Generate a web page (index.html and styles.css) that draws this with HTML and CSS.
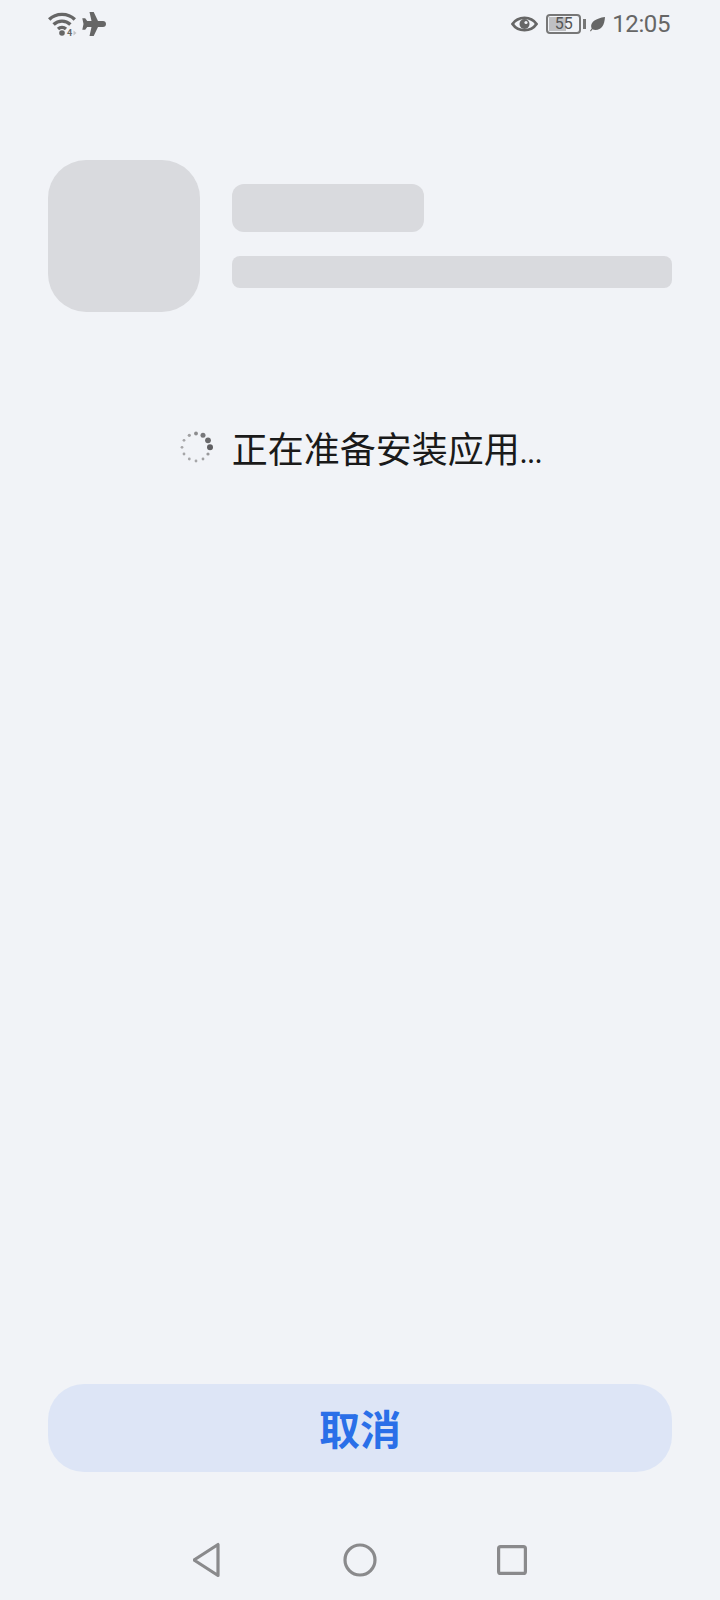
FILE: index.html
```html
<!DOCTYPE html>
<html lang="zh-CN">
<head>
    <meta charset="UTF-8">
    <meta name="viewport" content="width=device-width, initial-scale=1.0">
    <title>正在准备安装应用</title>
    <link rel="stylesheet" href="styles.css">
</head>
<body>
    <div class="screen">
        <div class="status-bar">
            <div class="status-left">
                <svg class="icon-wifi" width="30" height="24" viewBox="0 0 30 24">
                    <path d="M1.200 7.500C8 0.700 20 0.700 26.800 7.500" fill="none" stroke="#666" stroke-width="3.400"/>
                    <path d="M5.600 12.500C10.300 8 17.700 8 22.400 12.500" fill="none" stroke="#666" stroke-width="3.400"/>
                    <path d="M10 17C12.300 15 15.700 15 18 17" fill="none" stroke="#666" stroke-width="3.400"/>
                    <circle cx="14" cy="21" r="2.800" fill="#666"/>
                    <text x="19" y="23.500" class="wifi-num">4</text>
                    <path d="M25.500 18.500l3 2.500-3 2.500z" fill="#c4c4c6"/>
                </svg>
                <svg class="icon-plane" width="24" height="24" viewBox="0 0 24 24">
                    <path d="M7.500 0h4.200L16 9h5c1.800 0 3 1.300 3 3s-1.200 3-3 3h-5l-4.300 9H7.500l2-9H5.200l-2 2.800H0.300L1.500 12 0.300 6.200h2.900l2 2.800h4.300z" fill="#666"/>
                </svg>
            </div>
            <div class="status-right">
                <svg class="icon-eye" width="27" height="18" viewBox="0 0 27 18">
                    <path d="M1.500 9C7 0.800 20 0.800 25.500 9C20 17.200 7 17.200 1.500 9z" fill="none" stroke="#666" stroke-width="2.800"/>
                    <circle cx="13.500" cy="9" r="5" fill="#666"/>
                    <circle cx="15" cy="7.500" r="1.600" fill="#f1f3f7"/>
                </svg>
                <div class="battery">
                    <div class="battery-body">
                        <span class="battery-fill"></span>
                        <span class="battery-num">55</span>
                    </div>
                    <span class="battery-nub"></span>
                </div>
                <svg class="icon-leaf" width="15" height="15" viewBox="0 0 15 15">
                    <path d="M15 0C14.500 8 11.500 13 5.500 13C4.300 13 3.300 12.700 2.500 12.200L0.800 14.500L0 13.800L1.700 11.500C-0.500 7 3.500 1.500 15 0z" fill="#666"/>
                </svg>
                <span class="clock">12:05</span>
            </div>
        </div>

        <div class="app-info">
            <div class="app-icon"></div>
            <div class="app-text">
                <div class="app-name"></div>
                <div class="app-desc"></div>
            </div>
        </div>

        <div class="progress">
            <svg class="spinner" width="36" height="36" viewBox="0 0 36 36">
                <circle cx="18" cy="4.500" r="1.900" fill="#8c8c8e"/>
                <circle cx="25" cy="6.300" r="2.500" fill="#77777a"/>
                <circle cx="30" cy="11.300" r="2.900" fill="#6a6a6c"/>
                <circle cx="32" cy="18.300" r="3" fill="#5f5f62"/>
                <circle cx="30" cy="25" r="1.600" fill="#98989a"/>
                <circle cx="25" cy="30" r="1.400" fill="#a0a0a2"/>
                <circle cx="18" cy="32" r="1.400" fill="#a6a6a8"/>
                <circle cx="11.300" cy="30" r="1.400" fill="#a6a6a8"/>
                <circle cx="6" cy="25" r="1.400" fill="#a6a6a8"/>
                <circle cx="4" cy="18.300" r="1.400" fill="#a6a6a8"/>
                <circle cx="6" cy="11.300" r="1.400" fill="#a6a6a8"/>
                <circle cx="11.300" cy="6.300" r="1.600" fill="#a0a0a2"/>
            </svg>
            <span class="progress-text">正在准备安装应用<span class="dots">...</span></span>
        </div>

        <div class="spacer"></div>

        <button class="btn-cancel" type="button">取消</button>

        <div class="nav-bar">
            <svg width="30" height="36" viewBox="0 0 30 36">
                <path d="M1 18L25 2.500V33.500z" fill="none" stroke="#8a8a8c" stroke-width="3.200" stroke-linejoin="round"/>
            </svg>
            <svg width="34" height="34" viewBox="0 0 34 34">
                <circle cx="17" cy="17" r="15" fill="none" stroke="#8a8a8c" stroke-width="3.200"/>
            </svg>
            <svg width="30" height="30" viewBox="0 0 30 30">
                <rect x="1.600" y="1.600" width="26.800" height="26.800" rx="2" fill="none" stroke="#8a8a8c" stroke-width="3.200"/>
            </svg>
        </div>
    </div>
</body>
</html>
```

FILE: styles.css
```css
* {
    margin: 0;
    padding: 0;
    box-sizing: border-box;
}

body {
    background: #f1f3f7;
    font-family: "Noto Sans CJK SC", Roboto, sans-serif;
}

.screen {
    width: 720px;
    height: 1600px;
    display: flex;
    flex-direction: column;
    padding: 0 48px;
}

.status-bar {
    height: 48px;
    display: flex;
    justify-content: space-between;
    align-items: center;
}

.status-left {
    display: flex;
    align-items: center;
    gap: 4px;
}

.wifi-num {
    font-family: Roboto, sans-serif;
    font-size: 9px;
    font-weight: 700;
    fill: #666;
}

.status-right {
    display: flex;
    align-items: center;
    margin-right: 2px;
}

.icon-eye {
    margin-right: 8px;
}

.battery {
    display: flex;
    align-items: center;
    gap: 2px;
    margin-right: 4px;
}

.battery-body {
    position: relative;
    width: 35px;
    height: 20px;
    border: 2px solid #777;
    border-radius: 4px;
    display: flex;
    align-items: center;
    justify-content: center;
}

.battery-fill {
    position: absolute;
    left: 1px;
    top: 1px;
    bottom: 1px;
    width: 17px;
    background: #bfc0c3;
}

.battery-num {
    position: relative;
    font-family: Roboto, sans-serif;
    font-size: 16px;
    line-height: 1;
    color: #555;
}

.battery-nub {
    width: 3px;
    height: 10px;
    background: #777;
}

.icon-leaf {
    margin-right: 7px;
}

.clock {
    font-family: Roboto, sans-serif;
    font-size: 24px;
    letter-spacing: -0.4px;
    line-height: 1;
    color: #666;
}

.app-info {
    display: flex;
    align-items: center;
    gap: 32px;
    margin-top: 112px;
}

.app-icon {
    width: 152px;
    height: 152px;
    border-radius: 38px;
    background: #d9dade;
    flex-shrink: 0;
}

.app-text {
    flex: 1;
    display: flex;
    flex-direction: column;
    gap: 24px;
}

.app-name {
    width: 192px;
    height: 48px;
    border-radius: 12px;
    background: #d9dade;
}

.app-desc {
    height: 32px;
    border-radius: 8px;
    background: #d9dade;
}

.progress {
    display: flex;
    align-items: center;
    justify-content: center;
    gap: 18px;
    margin-top: 109px;
}

.spinner {
    margin-bottom: 5px;
}

.progress-text {
    font-size: 36px;
    line-height: 52px;
    color: #1a1a1a;
}

.dots {
    font-size: 27px;
}

.spacer {
    flex: 1;
}

.btn-cancel {
    height: 88px;
    padding-bottom: 3px;
    border: none;
    border-radius: 36px;
    background: #dde5f6;
    color: #2a6fe8;
    font-family: inherit;
    font-size: 41px;
    font-weight: 700;
}

.nav-bar {
    height: 80px;
    margin-top: 48px;
    display: flex;
    align-items: center;
    justify-content: center;
    gap: 120px;
}
```
